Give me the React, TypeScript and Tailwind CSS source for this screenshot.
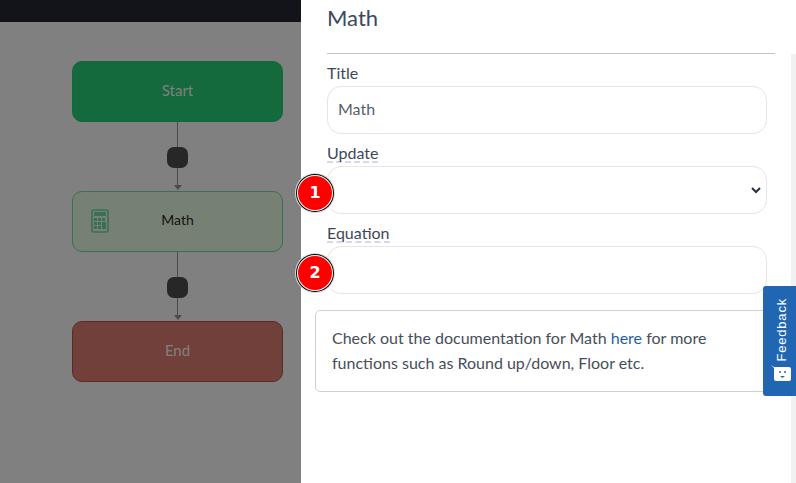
function Connector() {
  return (
    <div className="flex h-[69px] w-[211px] flex-col items-center">
      <div className="h-[25px] w-px bg-[#4b4b4b]" />
      <div className="h-[21px] w-[21px] shrink-0 rounded-[7px] bg-[#272727]" />
      <div className="h-[17px] w-px bg-[#4b4b4b]" />
      <div className="h-0 w-0 border-x-[4px] border-t-[5px] border-x-transparent border-t-[#4b4b4b]" />
    </div>
  );
}

function Calc() {
  return (
    <svg width="18" height="24" viewBox="0 0 18 24" className="block">
      <rect x="1" y="1" width="16" height="22" rx="2" fill="none" stroke="#3a6f55" strokeWidth="1.6" />
      <rect x="3" y="3" width="12" height="4" fill="#3a6f55" />
      {[9, 13, 17].map((y) =>
        [3, 7].map((x) => <rect key={`${x}-${y}`} x={x} y={y} width="3" height="3" fill="#3a6f55" />),
      )}
      <rect x="11" y="9" width="3" height="3" fill="#3a6f55" />
      <rect x="11" y="13" width="4" height="7" fill="#3a6f55" />
    </svg>
  );
}

function Badge({ n }: { n: number }) {
  return (
    <div className="absolute left-[-30px] top-[9px] z-10 flex h-[34px] w-[34px] items-center justify-center rounded-full bg-[#ff0000] text-[16px] font-bold text-white shadow-[0_0_0_1px_#fff,0_0_0_2px_#000,0_0_0_3px_#d8d8d8] [font-family:'DejaVu_Sans',sans-serif]">
      {n}
    </div>
  );
}

function Field({ label, dashed, children }: { label: string; dashed?: boolean; children?: React.ReactNode }) {
  return (
    <div className="w-[440px]">
      <div className="mt-[-1px] h-[21px] text-[16px] leading-[16px] text-[#3c4858]">
        <span className={dashed ? "inline-block border-b-2 border-dashed border-[#d6d6ec]" : "inline-block"}>{label}</span>
      </div>
      <div className="relative flex h-[48px] items-center rounded-[14px] border border-[#e4e4e7] bg-white px-[10px] pb-[2px] text-[16px] text-[#556070]">
        {children}
      </div>
    </div>
  );
}

export default function App() {
  return (
    <div className="relative flex h-[483px] w-[796px] overflow-hidden bg-white [font-family:Lato,'Noto_Sans',sans-serif]">
      <div className="flex w-[301px] shrink-0 flex-col bg-[#808080]">
        <div className="h-[22px] bg-[#131419]" />
        <div className="flex flex-col pl-[72px] pt-[39px]">
          <div className="flex h-[61px] w-[211px] items-center justify-center rounded-[10px] border border-[#14663c] bg-[#156a3d] pb-[3px] text-[15px] text-[#808080]">
            Start
          </div>
          <Connector />
          <div className="relative flex h-[61px] w-[211px] items-center justify-center rounded-[10px] border border-[#3a6f55] bg-[#778173] pb-[3px] text-sm text-[#111]">
            <div className="absolute left-[18px] top-[17px]">
              <Calc />
            </div>
            Math
          </div>
          <Connector />
          <div className="flex h-[61px] w-[211px] items-center justify-center rounded-[10px] border border-[#5f2a26] bg-[#72403b] pb-[3px] text-[15px] text-[#808080]">
            End
          </div>
        </div>
      </div>

      <div className="relative flex flex-1 flex-col pl-[26px]">
        <div className="flex h-[36px] items-center text-[22px] leading-none text-[#3c4858]">Math</div>
        <div className="mt-[17px] h-px w-[448px] bg-[#c4c4c4]" />
        <div className="mt-[12px] flex flex-col gap-[12px]">
          <Field label="Title">Math</Field>
          <Field label="Update" dashed>
            <Badge n={1} />
            <svg width="10" height="7" viewBox="0 0 10 7" className="absolute right-[5px] top-[20px]">
              <path d="M1 1l4 4 4-4" fill="none" stroke="#27313f" strokeWidth="2" />
            </svg>
          </Field>
          <Field label="Equation" dashed>
            <Badge n={2} />
          </Field>
        </div>
        <div className="ml-[-12px] mt-[16px] h-[82px] w-[480px] rounded-[5px] border border-[#d0d0d0] bg-white pl-[16px] pt-[14px] text-[16px] leading-[25px] text-[#464e5a]">
          Check out the documentation for Math <span className="text-[#1f5fa8]">here</span> for more
          <br />
          functions such as Round up/down, Floor etc.
        </div>
        <div className="absolute right-0 top-[54px] bottom-0 w-[5px] bg-[#f1f1f1]" />
        <div className="absolute right-0 top-[286px] flex h-[110px] w-[33px] flex-col items-center justify-between rounded-l-[3px] bg-[#2066b2] pb-[15px] pt-[12px] text-white">
          <span className="ml-[4px] rotate-180 text-[13px] leading-none tracking-[0.8px] [font-family:'Liberation_Sans',sans-serif] [writing-mode:vertical-rl]">
            Feedback
          </span>
          <svg width="20" height="16" viewBox="0 0 20 16" className="ml-[2px]">
            <path d="M0 0l3 2h15a2 2 0 0 1 2 2v10a2 2 0 0 1-2 2H5a2 2 0 0 1-2-2V3z" fill="#fff" />
            <circle cx="9" cy="7" r="1" fill="#2066b2" />
            <circle cx="14" cy="7" r="1" fill="#2066b2" />
            <path d="M9 11h5l-2.5 2z" fill="#2066b2" />
          </svg>
        </div>
      </div>
    </div>
  );
}
